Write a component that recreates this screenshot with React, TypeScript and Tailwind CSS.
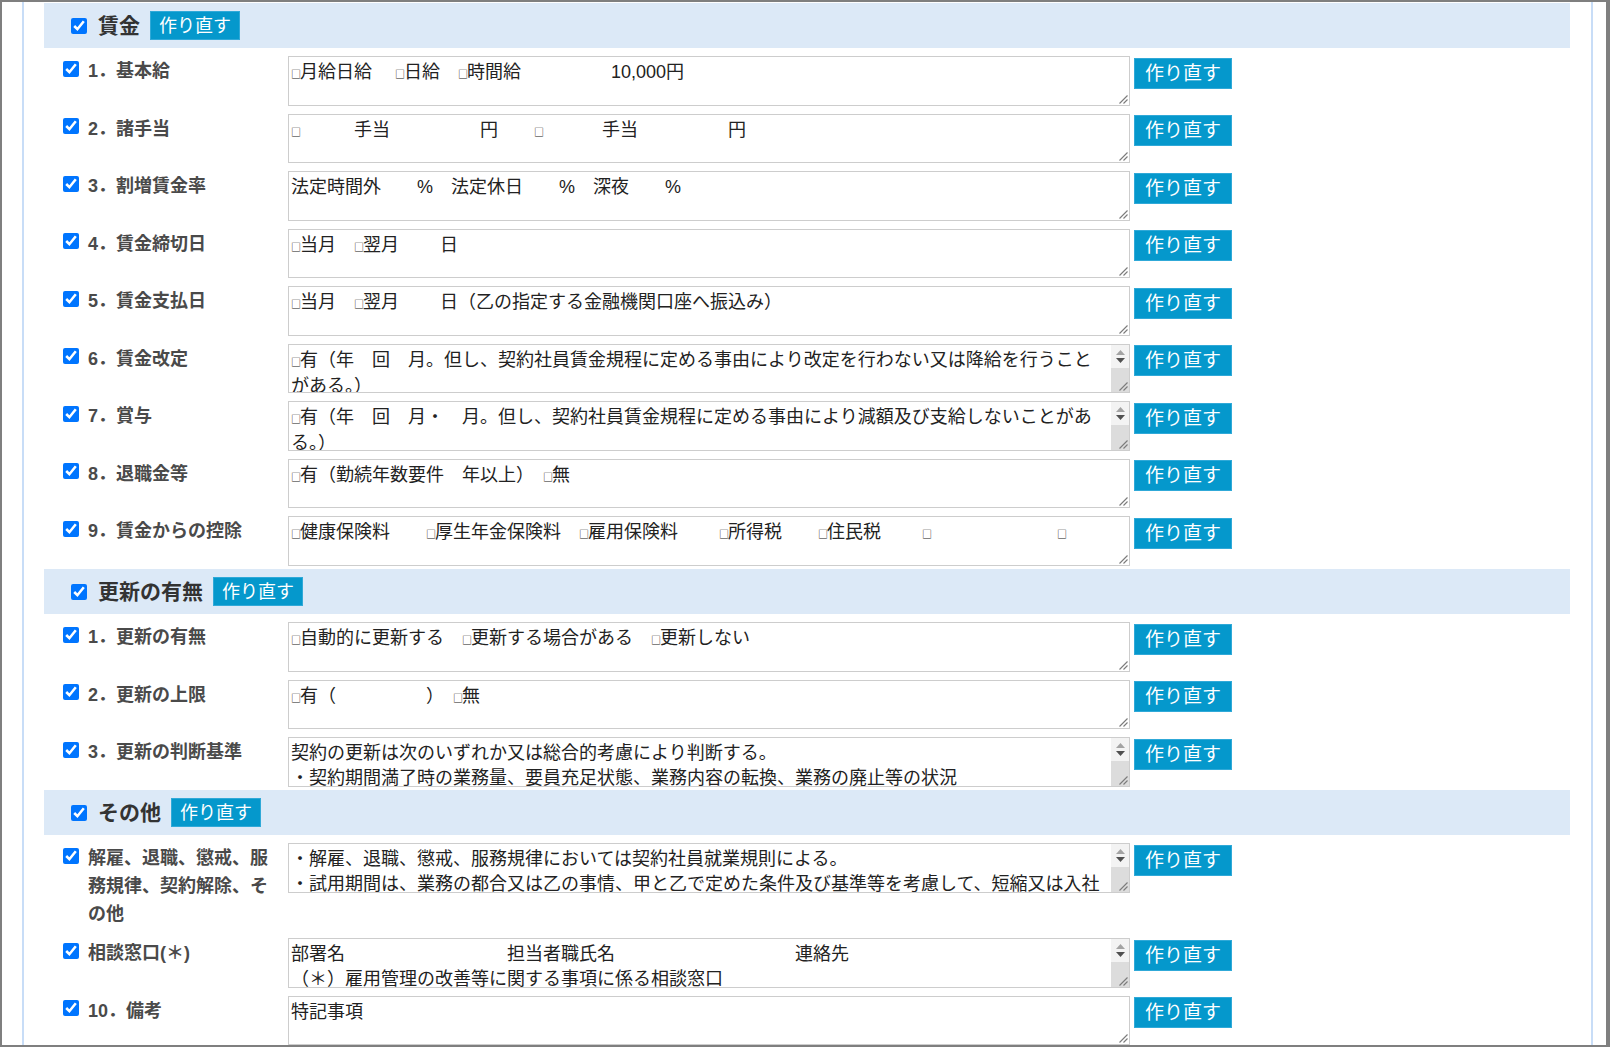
import React from 'react';

interface Row {
  label: string;
  text: string;
  scroll?: boolean;
}

interface Section {
  title: string;
  rows: Row[];
}

const sections: Section[] = [
  {
    title: '賃金',
    rows: [
      { label: '1．基本給', text: '□月給日給　 □日給　□時間給　　　　　10,000円' },
      { label: '2．諸手当', text: '□　　　手当　　　　　円　　□　　　 手当　　　　　円' },
      { label: '3．割増賃金率', text: '法定時間外　　%　法定休日　　%　深夜　　%' },
      { label: '4．賃金締切日', text: '□当月　□翌月　　 日' },
      { label: '5．賃金支払日', text: '□当月　□翌月　　 日（乙の指定する金融機関口座へ振込み）' },
      {
        label: '6．賃金改定',
        text: '□有（年　回　月。但し、契約社員賃金規程に定める事由により改定を行わない又は降給を行うことがある。）',
        scroll: true,
      },
      {
        label: '7．賞与',
        text: '□有（年　回　月・　月。但し、契約社員賃金規程に定める事由により減額及び支給しないことがある。）',
        scroll: true,
      },
      { label: '8．退職金等', text: '□有（勤続年数要件　年以上）　□無' },
      {
        label: '9．賃金からの控除',
        text: '□健康保険料　　□厚生年金保険料　□雇用保険料　　 □所得税　　□住民税　　 □　　　　　　　□',
      },
    ],
  },
  {
    title: '更新の有無',
    rows: [
      { label: '1．更新の有無', text: '□自動的に更新する　□更新する場合がある　□更新しない' },
      { label: '2．更新の上限', text: '□有（　　　　　）　□無' },
      {
        label: '3．更新の判断基準',
        text: '契約の更新は次のいずれか又は総合的考慮により判断する。\n・契約期間満了時の業務量、要員充足状態、業務内容の転換、業務の廃止等の状況\n・契約社員の勤務成績、態度、能力\n・会社の経営状況',
        scroll: true,
      },
    ],
  },
  {
    title: 'その他',
    rows: [
      {
        label: '解雇、退職、懲戒、服務規律、契約解除、その他',
        text: '・解雇、退職、懲戒、服務規律においては契約社員就業規則による。\n・試用期間は、業務の都合又は乙の事情、甲と乙で定めた条件及び基準等を考慮して、短縮又は入社日から起算して延長することがある。',
        scroll: true,
      },
      {
        label: '相談窓口(＊)',
        text: '部署名　　　　　　　　　担当者職氏名　　　　　　　　　　連絡先\n（＊）雇用管理の改善等に関する事項に係る相談窓口',
        scroll: true,
      },
      { label: '10．備考', text: '特記事項' },
    ],
  },
];

// small square used in the option lists
const renderText = (s: string) =>
  s.split('□').map((part, i) => (
    <React.Fragment key={i}>
      {i > 0 && <span className="-mr-[1px] text-[10px] font-['Noto_Sans_CJK_JP',sans-serif]">□</span>}
      {part}
    </React.Fragment>
  ));

const Grip = () => (
  <svg width="10" height="10" viewBox="0 0 10 10" className="block">
    <line x1="9.5" y1="1.5" x2="1.5" y2="9.5" stroke="#7a7a7a" strokeWidth="1.1" />
    <line x1="9.5" y1="5.5" x2="5.5" y2="9.5" stroke="#7a7a7a" strokeWidth="1.1" />
  </svg>
);

const RedoButton = ({ small }: { small?: boolean }) =>
  small ? (
    <button className="h-[29px] w-[90px] shrink-0 border border-[#30a9d8] bg-[#0598cc] text-[18px] leading-none text-white">
      作り直す
    </button>
  ) : (
    <button className="mt-[1.5px] ml-[4px] h-[31px] w-[98px] shrink-0 border border-[#30a9d8] bg-[#0598cc] text-[19px] leading-none text-white">
      作り直す
    </button>
  );

const TextBox = ({ text, scroll }: { text: string; scroll?: boolean }) => (
  <div className="relative flex h-[49.5px] w-[842px] shrink-0 overflow-hidden border border-[#cdcdcd] bg-white">
    <div className="w-[816px] shrink-0 overflow-hidden whitespace-pre-wrap break-all pt-[3px] pl-[2px] text-[18px] leading-[25px] text-[#222]">
      {renderText(text)}
    </div>
    <div className="flex-1" />
    {scroll ? (
      <div className="flex w-[18px] shrink-0 flex-col">
        <div className="flex h-[23px] flex-col items-center justify-center gap-[3px] bg-[#f3f3f3]">
          <svg width="9" height="5" viewBox="0 0 9 5">
            <polygon points="4.5,0 9,5 0,5" fill="#a3a3a3" />
          </svg>
          <svg width="9" height="5" viewBox="0 0 9 5">
            <polygon points="0,0 9,0 4.5,5" fill="#505050" />
          </svg>
        </div>
        <div className="flex flex-1 items-end justify-end bg-[#dcdcdc] p-[1px]">
          <Grip />
        </div>
      </div>
    ) : (
      <div className="absolute right-[1px] bottom-[1px]">
        <Grip />
      </div>
    )}
  </div>
);

const App = () => {
  return (
    <div className="h-[1047px] w-[1610px] overflow-hidden border-t-2 border-r-4 border-b-2 border-l-2 border-[#7f7f7f] bg-white font-['Liberation_Sans','Noto_Sans_CJK_JP',sans-serif]">
      <div className="mr-[13px] ml-[20px] h-full border-r-2 border-l-2 border-[#c8ddf7] pt-[1px] pr-[21px] pl-[20px]">
        {sections.map((section) => (
          <div key={section.title} className="pb-[3.5px]">
            {/* Section header */}
            <div className="flex h-[45px] items-center bg-[#dce9f7] pl-[27px]">
              <input type="checkbox" defaultChecked className="h-4 w-4 accent-[#0075ff]" />
              <span className="mr-[10px] ml-[11px] text-[21px] font-bold text-[#333]">{section.title}</span>
              <RedoButton small />
            </div>

            {section.rows.map((row) => (
              <div key={row.label} className="mt-[8px] flex items-start">
                <div className="mt-[4.5px] ml-[19px] flex h-4 w-4 shrink-0">
                  <input type="checkbox" defaultChecked className="h-4 w-4 accent-[#0075ff]" />
                </div>
                <div className="ml-[9px] w-[190px] shrink-0 pt-[1px] pb-[2px] text-[18px] leading-[28px] font-bold text-[#4a4a4a]">
                  {row.label}
                </div>
                <div className="ml-[10px] flex items-start">
                  <TextBox text={row.text} scroll={row.scroll} />
                  <RedoButton />
                </div>
              </div>
            ))}
          </div>
        ))}
      </div>
    </div>
  );
};

export default App;
